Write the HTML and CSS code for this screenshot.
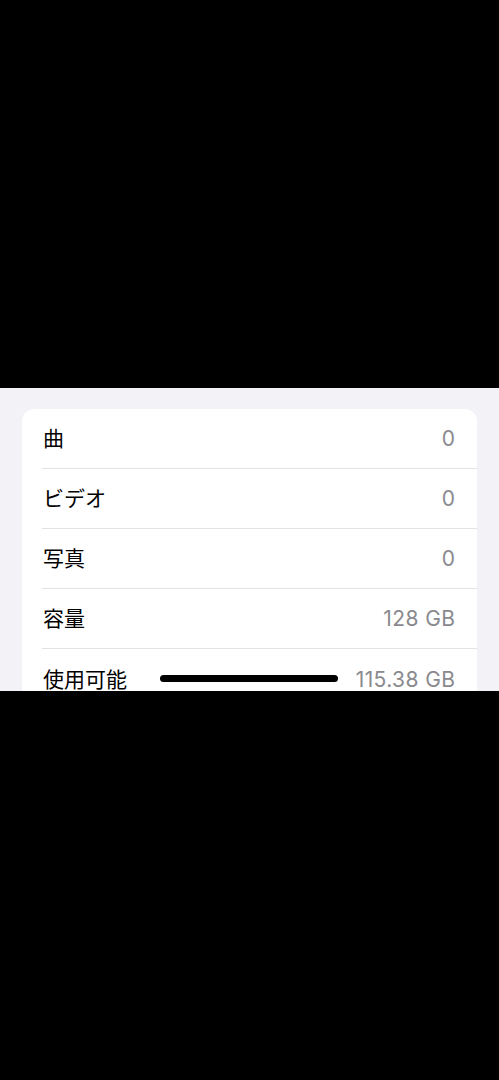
FILE: index.html
```html
<!DOCTYPE html>
<html lang="ja">
<head>
<meta charset="utf-8">
<link rel="stylesheet" href="styles.css">
</head>
<body>
<div class="top"></div>
<section class="screen">
  <div class="card">
    <div class="row"><span class="label">曲</span><span class="value">0</span></div>
    <div class="row"><span class="label">ビデオ</span><span class="value">0</span></div>
    <div class="row"><span class="label">写真</span><span class="value">0</span></div>
    <div class="row"><span class="label">容量</span><span class="value">128 GB</span></div>
    <div class="row"><span class="label">使用可能</span><span class="value">115.38 GB</span></div>
  </div>
  <div class="home-indicator"></div>
</section>
<div class="bottom"></div>
</body>
</html>
```
FILE: styles.css
```css
html, body {
  margin: 0;
  padding: 0;
  background: #000;
}
body {
  width: 499px;
  font-family: Inter, "Noto Sans CJK JP", sans-serif;
}
.top {
  height: 388px;
  background: #000;
}
.screen {
  position: relative;
  height: 303px;
  overflow: hidden;
  background: #f2f2f7;
  padding-top: 21px;
  box-sizing: border-box;
}
.card {
  margin: 0 22px;
  background: #fff;
  border-radius: 12px;
  padding-left: 20px;
}
.row {
  height: 60px;
  display: flex;
  align-items: center;
  justify-content: space-between;
  padding-right: 22px;
  border-bottom: 1px solid #e3e3e6;
  box-sizing: border-box;
}
.row:last-child {
  border-bottom: none;
}
.label {
  font-family: "Noto Sans CJK JP", sans-serif;
  font-size: 21px;
  line-height: 1;
  color: #000;
  padding-left: 1px;
  padding-bottom: 2px;
}
.value {
  font-size: 21px;
  line-height: 1;
  font-weight: 400;
  letter-spacing: 0.4px;
  margin-right: -0.4px;
  color: #8a8a8e;
}
.home-indicator {
  position: absolute;
  left: 160px;
  top: 287px;
  width: 178px;
  height: 7px;
  border-radius: 4px;
  background: #000;
}
.bottom {
  height: 389px;
  background: #000;
}
```
